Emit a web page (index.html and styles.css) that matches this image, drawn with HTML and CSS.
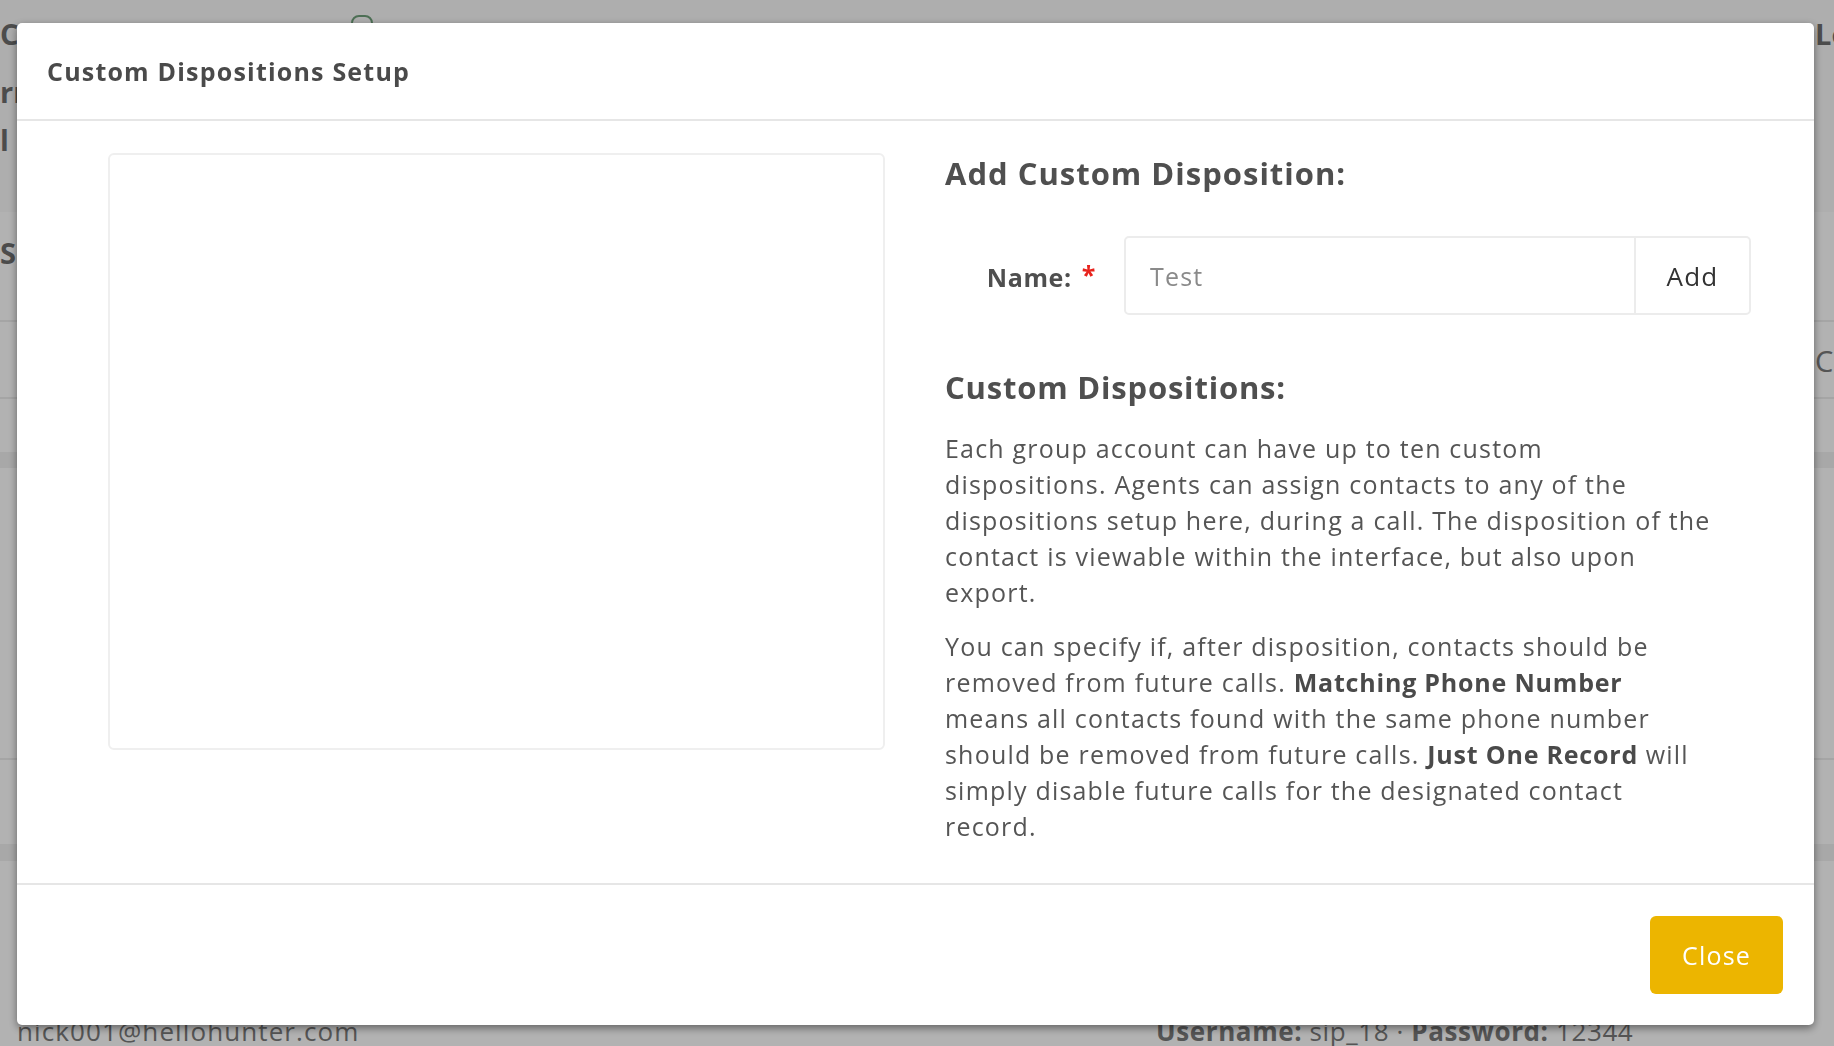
FILE: index.html
```html
<!DOCTYPE html>
<html lang="en">
<head>
<meta charset="utf-8">
<title>Custom Dispositions Setup</title>
<link rel="stylesheet" href="styles.css">
</head>
<body>
<div class="page">
  <div class="bg-top">
    <div class="bg-icon-row">
      <svg class="bg-icon" width="36" height="30" viewBox="0 0 36 30" fill="none" stroke="#6fa07a" stroke-width="2">
        <path d="M14 14 a7 7 0 0 1 7 -7 h6 a7 7 0 0 1 7 7 v10"/>
        <path d="M3 24 v-3 a6 6 0 0 1 6 -6 h5 a6 6 0 0 1 6 6 v3"/>
      </svg>
    </div>
    <div class="bg-line bg-line1"><span class="bg-l strong">Co</span><span class="bg-r strong">Lo</span></div>
    <div class="bg-line bg-line2"><span class="bg-l strong">rre</span><span class="bg-r"></span></div>
    <div class="bg-line bg-line3"><span class="bg-l strong">l I</span><span class="bg-r"></span></div>
  </div>
  <div class="bg-band bg-band1"><div class="bg-line"><span class="bg-l strong">SE</span><span class="bg-r"></span></div></div>
  <div class="bg-band bg-band2"><div class="bg-line"><span class="bg-l"></span><span class="bg-r">Ca</span></div></div>
  <div class="bg-band bg-band3"></div>
  <div class="bg-band bg-dark"></div>
  <div class="bg-band bg-band4"></div>
  <div class="bg-band bg-band5"></div>
  <div class="bg-band bg-dark"></div>
  <div class="bg-band bg-band6">
    <div class="bg-bottom"><span class="bg-email">nick001@hellohunter.com</span><span class="bg-cred"><b>Username:</b> sip_18 · <b>Password:</b> 12344</span></div>
  </div>
</div>

<div class="overlay">
  <div class="modal">
    <div class="modal-header">
      <h4 class="modal-title">Custom Dispositions Setup</h4>
    </div>
    <div class="modal-body">
      <div class="list-box"></div>
      <div class="side">
        <h3 class="heading">Add Custom Disposition:</h3>
        <div class="form-row">
          <label class="label">Name: <span class="req">*</span></label>
          <div class="input-group">
            <input class="input" type="text" placeholder="Test">
            <span class="addon">Add</span>
          </div>
        </div>
        <h3 class="heading heading2">Custom Dispositions:</h3>
        <p class="text">Each group account can have up to ten custom<br>dispositions. Agents can assign contacts to any of the<br>dispositions setup here, during a call. The disposition of the<br>contact is viewable within the interface, but also upon<br>export.</p>
        <p class="text">You can specify if, after disposition, contacts should be<br>removed from future calls. <b>Matching Phone Number</b><br>means all contacts found with the same phone number<br>should be removed from future calls. <b>Just One Record</b> will<br>simply disable future calls for the designated contact<br>record.</p>
      </div>
    </div>
    <div class="modal-footer">
      <button class="btn-close" type="button">Close</button>
    </div>
  </div>
</div>
</body>
</html>
```
FILE: styles.css
```css
* { box-sizing: border-box; }

html, body {
  margin: 0;
  padding: 0;
  height: 100%;
  overflow: hidden;
}

body {
  font-family: "Open Sans", "Liberation Sans", sans-serif;
  background: #fbfbfb;
  color: #555;
}

/* ---------- background page (under the overlay) ---------- */
.page {
  height: 1046px;
  display: flex;
  flex-direction: column;
  color: #7a7a7a;
}

.bg-top {
  height: 213px;
  background: #f9f9f9;
}

.bg-icon-row {
  height: 22px;
  padding-left: 338px;
  padding-top: 9px;
}

.bg-icon { display: block; }

.bg-line {
  display: grid;
  grid-template-columns: 1815px 1fr;
  font-size: 29px;
  line-height: 32px;
  white-space: nowrap;
  overflow: hidden;
}

.strong { font-weight: 700; color: #6e6e6e; }

.bg-line1 { margin-top: -4px; }
.bg-line2 { margin-top: 26px; }
.bg-line3 { margin-top: 16px; }

.bg-band1 { height: 110px; background: #ffffff; border-bottom: 2px solid #ececec; padding-top: 25px; }
.bg-band2 { height: 77px; background: #ffffff; border-bottom: 2px solid #ececec; padding-top: 23px; }
.bg-band3 { height: 53px; background: #ffffff; }
.bg-dark { height: 17px; background: #f1f1f1; }
.bg-band4 { height: 293px; background: #ffffff; border-bottom: 2px solid #ececec; }
.bg-band5 { height: 84px; background: #ffffff; }
.bg-band6 { flex: 1; background: #ffffff; }

.bg-bottom {
  display: flex;
  padding-left: 17px;
  padding-top: 155px;
  font-size: 26px;
  line-height: 30px;
  letter-spacing: 1.1px;
  white-space: nowrap;
}

.bg-email { width: 1139px; }
.bg-cred { letter-spacing: 0.6px; }
.bg-cred b { font-weight: 700; }

/* ---------- overlay + modal ---------- */
.overlay {
  position: fixed;
  inset: 0;
  background: rgba(0, 0, 0, 0.3);
  padding: 23px 20px 21px 17px;
}

.modal {
  height: 100%;
  background: #fff;
  border-radius: 5px;
  box-shadow: 0 3px 9px rgba(0, 0, 0, 0.45);
  display: flex;
  flex-direction: column;
}

.modal-header {
  height: 98px;
  border-bottom: 2px solid #e6e6e6;
  display: flex;
  align-items: center;
  padding: 0 30px;
}

.modal-title {
  margin: 0;
  font-size: 25px;
  font-weight: 700;
  color: #4a4a4a;
  letter-spacing: 1.2px;
}

.modal-body {
  flex: 1;
  display: flex;
  gap: 60px;
  padding: 32px 63px 0 91px;
}

.list-box {
  width: 777px;
  height: 597px;
  border: 2px solid #efefef;
  border-radius: 6px;
  flex: none;
}

.side {
  flex: 1;
}

.heading {
  margin: 0;
  font-size: 31px;
  line-height: 40px;
  font-weight: 700;
  color: #4f4f4f;
  letter-spacing: 1px;
}

.form-row {
  display: flex;
  align-items: center;
  margin-top: 43px;
}

.label {
  width: 179px;
  flex: none;
  text-align: right;
  padding-right: 28px;
  font-size: 25px;
  font-weight: 700;
  color: #4f4f4f;
  letter-spacing: 0.6px;
  white-space: nowrap;
}

.req {
  color: #e8231d;
  font-size: 25px;
  font-weight: 700;
  vertical-align: 3px;
  margin-left: 3px;
}

.input-group {
  flex: 1;
  display: flex;
  height: 79px;
  border: 2px solid #ececec;
  border-radius: 5px;
}

.input {
  flex: 1;
  min-width: 0;
  border: 0;
  outline: none;
  padding: 0 24px;
  font-family: inherit;
  font-size: 25px;
  letter-spacing: 1.2px;
  color: #555;
  background: transparent;
}

.input::placeholder { color: #8a8a8a; }

.addon {
  width: 115px;
  flex: none;
  border-left: 2px solid #ececec;
  display: flex;
  align-items: center;
  justify-content: center;
  font-size: 26px;
  letter-spacing: 1.2px;
  color: #333;
}

.heading2 { margin-top: 52px; letter-spacing: 0.8px; }

.text {
  margin: 23px 0 0;
  font-size: 25px;
  line-height: 36px;
  letter-spacing: 1.2px;
  color: #555;
}

.text + .text { margin-top: 18px; }

.text b { font-weight: 700; color: #4a4a4a; letter-spacing: 0.8px; }

.modal-footer {
  border-top: 2px solid #e6e6e6;
  display: flex;
  justify-content: flex-end;
  padding: 31px 31px;
}

.btn-close {
  width: 133px;
  height: 78px;
  border: 0;
  border-radius: 6px;
  background: #ecb500;
  color: #fff;
  font-family: inherit;
  font-size: 25px;
  letter-spacing: 1.2px;
  cursor: pointer;
}
```
